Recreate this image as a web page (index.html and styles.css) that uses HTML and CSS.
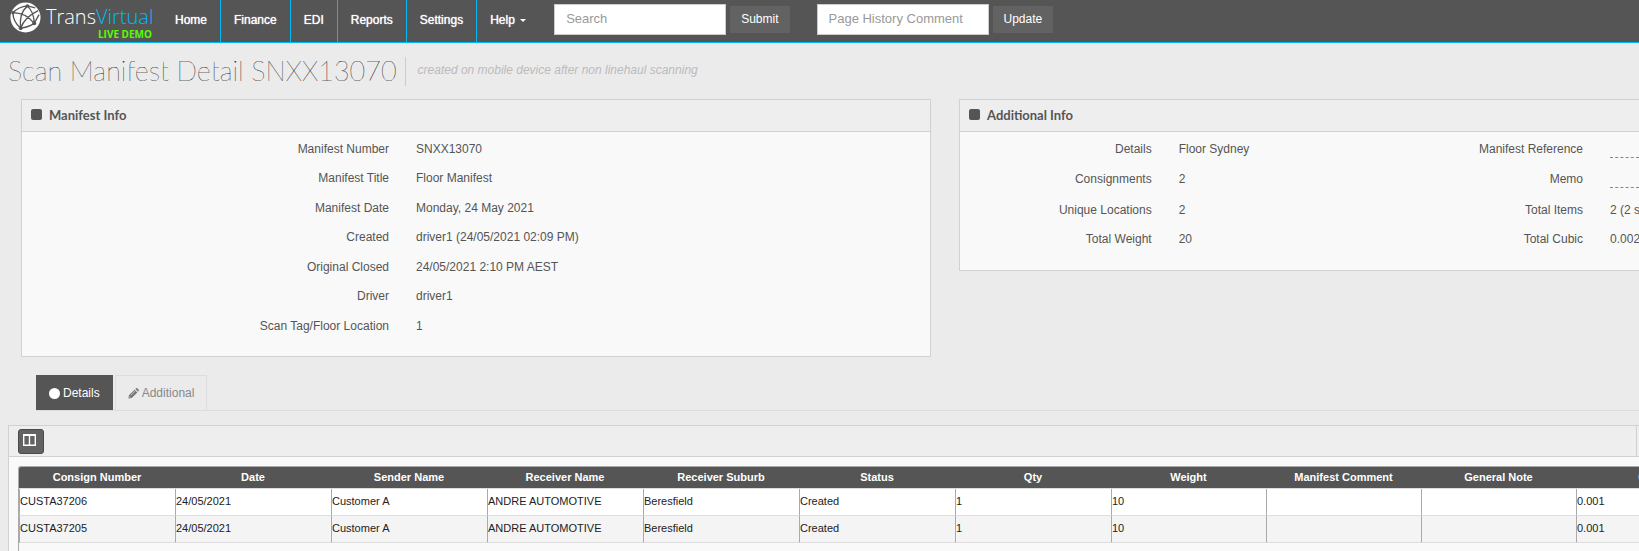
FILE: index.html
```html
<!DOCTYPE html>
<html lang="en">
<head>
<meta charset="utf-8">
<title>Scan Manifest Detail SNXX13070</title>
<link rel="stylesheet" href="styles.css">
</head>
<body>
<header class="navbar">
  <a class="brand" href="#">
    <svg class="brand-mark" viewBox="0 0 32 32" aria-hidden="true">
      <circle cx="16" cy="16" r="15.5" fill="#fff"/>
      <g fill="none" stroke="#555" stroke-width="1.4">
        <path d="M3 11Q9 5 18 4L26 6M18 4Q9 12 11 27M18 4Q25 11 25 22M3 11Q16 11 25 22L30 13M11 27Q19 26 25 22M3 11Q3 20 11 27M11 27Q15 16 29 9"/>
      </g>
      <g fill="#555"><circle cx="18" cy="4" r="1.8"/><circle cx="3" cy="11" r="1.7"/><circle cx="11" cy="27" r="2"/><circle cx="25" cy="22" r="2"/></g>
    </svg>
    <span class="brand-text">
      <span class="brand-name">Trans<span class="brand-accent">Virtual</span></span>
      <span class="brand-tag">LIVE DEMO</span>
    </span>
  </a>
  <nav class="menu">
    <a href="#">Home</a>
    <a href="#">Finance</a>
    <a href="#">EDI</a>
    <a href="#">Reports</a>
    <a href="#">Settings</a>
    <a href="#">Help <span class="caret"></span></a>
  </nav>
  <form class="nav-form">
    <input type="text" placeholder="Search" aria-label="Search">
    <button type="button">Submit</button>
  </form>
  <form class="nav-form">
    <input type="text" placeholder="Page History Comment" aria-label="Page History Comment">
    <button type="button">Update</button>
  </form>
</header>

<main>
  <div class="page-title">
    <h1>Scan Manifest Detail SNXX13070</h1>
    <p>created on mobile device after non linehaul scanning</p>
  </div>

  <div class="panels">
    <section class="panel">
      <h2 class="panel-head"><span class="square"></span>Manifest Info</h2>
      <dl class="facts facts-manifest">
        <dt>Manifest Number</dt><dd>SNXX13070</dd>
        <dt>Manifest Title</dt><dd>Floor Manifest</dd>
        <dt>Manifest Date</dt><dd>Monday, 24 May 2021</dd>
        <dt>Created</dt><dd>driver1 (24/05/2021 02:09 PM)</dd>
        <dt>Original Closed</dt><dd>24/05/2021 2:10 PM AEST</dd>
        <dt>Driver</dt><dd>driver1</dd>
        <dt>Scan Tag/Floor Location</dt><dd>1</dd>
      </dl>
    </section>
    <section class="panel panel-open">
      <h2 class="panel-head"><span class="square"></span>Additional Info</h2>
      <dl class="facts facts-additional">
        <dt>Details</dt><dd>Floor Sydney</dd>
        <dt>Manifest Reference</dt><dd><span class="editable"></span></dd>
        <dt>Consignments</dt><dd>2</dd>
        <dt>Memo</dt><dd><span class="editable"></span></dd>
        <dt>Unique Locations</dt><dd>2</dd>
        <dt>Total Items</dt><dd>2 (2 scanned)</dd>
        <dt>Total Weight</dt><dd>20</dd>
        <dt>Total Cubic</dt><dd>0.002</dd>
      </dl>
    </section>
  </div>

  <div class="tabs" role="tablist">
    <button class="tab tab-active" type="button" role="tab" aria-selected="true"><span class="dot"></span>Details</button>
    <button class="tab" type="button" role="tab" aria-selected="false"><svg class="pencil" viewBox="0 0 12 12" aria-hidden="true"><path fill="#777" d="M1 8L7.200 1.800L10.200 4.800L4 11L.5 11.500ZM8 1L9 .2Q9.600-.2 10.200.4L11.600 1.800Q12.200 2.500 11.700 3L11 4Z"/><path stroke="#ebebeb" stroke-width=".7" d="M3 8L8 3M1.500 9.500L2.700 10.600"/></svg>Additional</button>
  </div>

  <section class="grid-panel">
    <div class="grid-tools">
      <button class="columns-button" type="button" aria-label="Choose columns">
        <svg viewBox="0 0 14 12" aria-hidden="true"><path fill="none" stroke="#fff" stroke-width="1.4" d="M.7 1V11.300H12.300V1M6.500 1V11"/><path stroke="#fff" stroke-width="2" d="M0 1H13"/></svg>
      </button>
      <span class="tools-end"></span>
    </div>
    <div class="grid-wrap">
      <table class="grid">
        <colgroup><col class="col-wide" span="7"><col class="col-narrow" span="4"></colgroup>
        <thead>
          <tr><th>Consign Number</th><th>Date</th><th>Sender Name</th><th>Receiver Name</th><th>Receiver Suburb</th><th>Status</th><th>Qty</th><th>Weight</th><th>Manifest Comment</th><th>General Note</th><th>Cubic</th></tr>
        </thead>
        <tbody>
          <tr><td>CUSTA37206</td><td>24/05/2021</td><td>Customer A</td><td>ANDRE AUTOMOTIVE</td><td>Beresfield</td><td>Created</td><td>1</td><td>10</td><td></td><td></td><td>0.001</td></tr>
          <tr><td>CUSTA37205</td><td>24/05/2021</td><td>Customer A</td><td>ANDRE AUTOMOTIVE</td><td>Beresfield</td><td>Created</td><td>1</td><td>10</td><td></td><td></td><td>0.001</td></tr>
        </tbody>
      </table>
    </div>
  </section>
</main>
</body>
</html>
```
FILE: styles.css
```css
* { box-sizing: border-box; }

html { height: 100%; }

body {
  display: flex;
  flex-direction: column;
  min-height: 100%;
  margin: 0;
  overflow: hidden;
  background: #ebebeb;
  color: #555;
  font: 12px/20px "Liberation Sans", Arial, sans-serif;
}

button, input { font-family: inherit; }

/* Top bar */
.navbar {
  display: flex;
  align-items: stretch;
  height: 43px;
  background: #555;
  border-bottom: 1px solid #00b9f2;
}

.brand {
  display: flex;
  gap: 5px;
  width: 162px;
  padding: 2px 0 0 10px;
  text-decoration: none;
}

.brand-mark { width: 31px; height: 31px; }

.brand-text {
  display: flex;
  flex-direction: column;
  width: 106px;
  padding-top: 3px;
}

.brand-name {
  color: #fff;
  font: 300 20px/24px "Open Sans", sans-serif;
}

.brand-accent { color: #00b9f2; }

.brand-tag {
  color: #5f0;
  font: 700 10px/10px "Open Sans", sans-serif;
  text-align: right;
}

.menu { display: flex; }

.menu a {
  padding: 10px 13px 0;
  border-right: 1px solid #00b9f2;
  color: #fff;
  text-decoration: none;
  text-shadow: 0 0 1px #fff;
}

.menu a:last-child { border-right: 0; }

.caret {
  display: inline-block;
  margin: 0 0 2px 2px;
  border: 3px solid transparent;
  border-top-color: #fff;
  border-bottom: 0;
}

.nav-form {
  display: flex;
  align-items: flex-start;
  gap: 4px;
  padding: 4px 0 0 15px;
}

.nav-form + .nav-form { padding-left: 27px; }

.nav-form input {
  width: 172px;
  height: 31px;
  padding: 0 11px 2px;
  border: 1px solid #ccc;
  background: #fff;
  font-size: 13px;
}

.nav-form input::placeholder { color: #999; }

.nav-form button {
  height: 27px;
  margin-top: 2px;
  padding: 0 11px 1px;
  border: 0;
  background: #626262;
  color: #fff;
  font-size: 12px;
}

main {
  display: flex;
  flex: 1;
  flex-direction: column;
}

/* Title */
.page-title {
  display: flex;
  align-items: center;
  gap: 8px;
  padding: 14px 8px 13px;
}

.page-title h1 {
  margin: 0;
  padding-bottom: 2px;
  color: #444;
  font: 200 27px/27px Lato, sans-serif;
  text-shadow: 0 0 #444;
}

.page-title p {
  margin: 0;
  padding: 3px 12px 6px;
  border-left: 1px solid #ccc;
  color: #bbb;
  font-style: italic;
}

/* Summary panels */
.panels {
  display: grid;
  grid-template-columns: 91fr 68fr;
  align-items: start;
  gap: 28px;
  padding-left: 21px;
}

.panel {
  min-width: 0;
  border: 1px solid #d1d1d1;
  background: #f9f9f9;
}

.panel-open { border-right: 0; }

.panel-head {
  display: flex;
  align-items: center;
  gap: 7px;
  height: 32px;
  margin: 0;
  padding: 0 9px 2px;
  border-bottom: 1px solid #d1d1d1;
  background: #eee;
  font: 700 13px/20px Lato, sans-serif;
}

.square {
  width: 11px;
  height: 11px;
  border-radius: 2px;
  background: #555;
}

.facts {
  display: grid;
  align-content: start;
  gap: 0 27px;
  margin: 0;
  padding: 7px 0 20px;
  white-space: nowrap;
}

.facts dt { text-align: right; }
.facts dd { min-width: 0; margin: 0; }

.facts-manifest {
  grid-template-columns: 367fr 514fr;
  grid-template-rows: 29px 30px 29px 30px 29px 30px 20px;
}

.facts-additional {
  grid-template-columns: 192fr 173fr 205fr 29fr;
  grid-template-rows: 30px 31px 29px 20px;
  padding-bottom: 21px;
}

.editable {
  display: block;
  height: 19px;
  border-bottom: 1px dashed #888;
}

/* Tabs */
.tabs {
  display: flex;
  gap: 2px;
  margin: 18px 0 14px 36px;
  border-bottom: 1px solid #ddd;
}

.tab {
  display: flex;
  align-items: center;
  gap: 3px;
  height: 35px;
  padding: 0 12px;
  border: 1px solid #ddd;
  border-bottom: 0;
  background: transparent;
  color: #888;
  font-size: 12px;
}

.tab-active {
  border-color: #555;
  background: #555;
  color: #fff;
}

.dot {
  width: 11px;
  height: 11px;
  border-radius: 50%;
  background: #fff;
}

.pencil { width: 11px; height: 11px; }

/* Consignment grid */
.grid-panel {
  display: flex;
  flex: 1;
  flex-direction: column;
  margin-left: 8px;
  border: 1px solid #d1d1d1;
  border-width: 1px 0 0 1px;
  background: #f9f9f9;
}

.grid-tools {
  display: flex;
  align-items: center;
  justify-content: space-between;
  height: 31px;
  padding: 0 2px 0 9px;
  border-bottom: 1px solid #d1d1d1;
  background: #eee;
}

.columns-button {
  display: grid;
  place-items: center;
  width: 26px;
  height: 25px;
  padding: 0 2px 3px 0;
  border: 1px solid #4a4a4a;
  border-radius: 3px;
  background: #626262;
}

.columns-button svg { width: 14px; height: 12px; }

.tools-end {
  align-self: stretch;
  border-left: 1px solid #d1d1d1;
}

.grid-wrap {
  flex: 1;
  margin: 9px 0 0 9px;
  overflow: hidden;
  border: 1px solid #aaa;
  border-width: 1px 0 0 1px;
  border-radius: 3px 0 0 0;
}

.grid {
  width: 1712px;
  border-collapse: separate;
  border-spacing: 0;
  table-layout: fixed;
  color: #222;
  font-size: 11px;
  line-height: 20px;
}

.col-wide { width: 156px; }
.col-narrow { width: 155px; }

.grid th {
  height: 22px;
  padding: 0 2px 1px;
  border-bottom: 1px solid #ddd;
  background: #555;
  color: #fff;
}

.grid td {
  height: 27px;
  padding: 0 0 3px;
  border-bottom: 1px solid #ddd;
  border-left: 1px solid #aaa;
  background: #fff;
}

.grid tr:nth-child(even) td { background: #f4f4f4; }
```
